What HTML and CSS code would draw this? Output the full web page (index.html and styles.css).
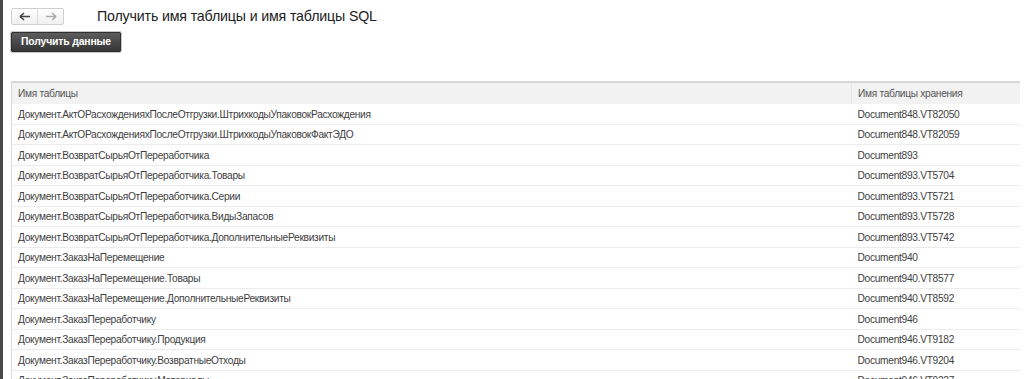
FILE: index.html
```html
<!DOCTYPE html>
<html lang="ru">
<head>
    <meta charset="UTF-8">
    <title>Получить имя таблицы и имя таблицы SQL</title>
    <link rel="stylesheet" href="styles.css">
</head>
<body>
    <div class="page">
        <div class="topBar">
            <div class="navBtns">
                <span class="navBtn">
                    <svg width="12" height="9" viewBox="0 0 12 9"><path d="M1 4.5h10M1 4.5l4-3.5M1 4.5l4 3.5" stroke="#444" stroke-width="1.6" fill="none"/></svg>
                </span>
                <span class="navBtn">
                    <svg width="12" height="9" viewBox="0 0 12 9"><path d="M11 4.5H1M11 4.5l-4-3.5M11 4.5l-4 3.5" stroke="#aaa" stroke-width="1.6" fill="none"/></svg>
                </span>
            </div>
            <h1 class="title">Получить имя таблицы и имя таблицы SQL</h1>
        </div>

        <div class="cmdBar">
            <button class="mainBtn">Получить данные</button>
        </div>

        <table class="grid">
            <thead>
                <tr>
                    <th class="colName">Имя таблицы</th>
                    <th class="colStorage">Имя таблицы хранения</th>
                </tr>
            </thead>
            <tbody id="rows"></tbody>
        </table>
    </div>

    <script>
        const rows = [
            ["Документ.АктОРасхожденияхПослеОтгрузки.ШтрихкодыУпаковокРасхождения", "Document848.VT82050"],
            ["Документ.АктОРасхожденияхПослеОтгрузки.ШтрихкодыУпаковокФактЭДО", "Document848.VT82059"],
            ["Документ.ВозвратСырьяОтПереработчика", "Document893"],
            ["Документ.ВозвратСырьяОтПереработчика.Товары", "Document893.VT5704"],
            ["Документ.ВозвратСырьяОтПереработчика.Серии", "Document893.VT5721"],
            ["Документ.ВозвратСырьяОтПереработчика.ВидыЗапасов", "Document893.VT5728"],
            ["Документ.ВозвратСырьяОтПереработчика.ДополнительныеРеквизиты", "Document893.VT5742"],
            ["Документ.ЗаказНаПеремещение", "Document940"],
            ["Документ.ЗаказНаПеремещение.Товары", "Document940.VT8577"],
            ["Документ.ЗаказНаПеремещение.ДополнительныеРеквизиты", "Document940.VT8592"],
            ["Документ.ЗаказПереработчику", "Document946"],
            ["Документ.ЗаказПереработчику.Продукция", "Document946.VT9182"],
            ["Документ.ЗаказПереработчику.ВозвратныеОтходы", "Document946.VT9204"],
            ["Документ.ЗаказПереработчику.Материалы", "Document946.VT9227"]
        ];

        const tbody = document.getElementById("rows");
        rows.forEach(row => {
            const tr = document.createElement("tr");
            tr.innerHTML = `<td>${row[0]}</td><td>${row[1]}</td>`;
            tbody.appendChild(tr);
        });
    </script>
</body>
</html>
```

FILE: styles.css
```css
html, body {
    margin: 0;
    height: 100%;
    overflow: hidden;
}

body {
    font-family: Arial, "Liberation Sans", sans-serif;
    background-color: #fff;
    color: #4d4d4d;
    border-left: 3px solid #4a4a4a;
    box-sizing: border-box;
}

.page {
    padding: 7px 4px 0 8px;
}

.topBar {
    display: flex;
    align-items: center;
    height: 18px;
}

.navBtns {
    display: flex;
    width: 53px;
    height: 17px;
    border: 1px solid #cfcfcf;
    border-radius: 2px;
    background: linear-gradient(#fff, #f0f0f0);
    box-sizing: border-box;
}

.navBtn {
    flex: 1;
    display: flex;
    align-items: center;
    justify-content: center;
}

.navBtn + .navBtn {
    border-left: 1px solid #dcdcdc;
}

.title {
    margin: 0 0 0 33px;
    font-size: 14.2px;
    letter-spacing: -0.15px;
    font-weight: normal;
    color: #222;
    line-height: 18px;
}

.cmdBar {
    margin-top: 6px;
    height: 20px;
}

.mainBtn {
    height: 20px;
    width: 110px;
    padding: 0;
    border: 1px solid #2f2f2f;
    outline: 1px solid #c8c8c8;
    background: linear-gradient(#5c5c5c, #363636);
    color: #fff;
    font-family: Arial, "Liberation Sans", sans-serif;
    font-size: 10.4px;
    letter-spacing: -0.15px;
    font-weight: bold;
    border-radius: 1px;
}

.grid {
    margin-top: 30px;
    width: 1009px;
    border-collapse: collapse;
    font-size: 10.2px;
    letter-spacing: -0.3px;
    border-top: 2px solid #d8d8d8;
    border-left: 1px solid #d8d8d8;
}

.grid th {
    height: 21px;
    background-color: #f2f2f2;
    font-weight: normal;
    text-align: left;
    padding: 0 6px;
    color: #555;
}

.grid th + th {
    border-left: 1px solid #e6e6e6;
}

.colStorage {
    width: 156px;
}

.grid td {
    height: 18.5px;
    padding: 1px 6px 0;
    border-bottom: 1px solid #ececec;
    color: #3e3e3e;
    white-space: nowrap;
}
```
